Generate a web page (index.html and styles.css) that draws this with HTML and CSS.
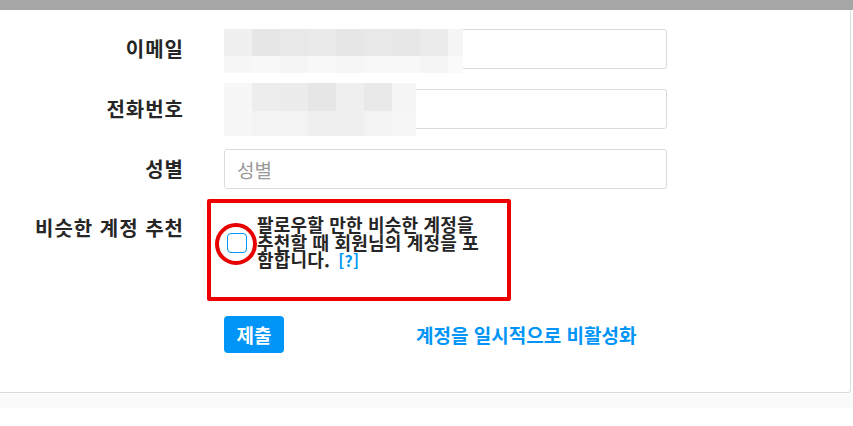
FILE: index.html
```html
<!DOCTYPE html>
<html lang="ko">
<head>
  <meta charset="UTF-8">
  <meta name="viewport" content="width=device-width, initial-scale=1.0">
  <title>프로필 편집</title>
  <link rel="stylesheet" href="styles.css">
</head>
<body>
  <div class="topbar"></div>

  <main class="card">
    <form class="settings">
      <div class="row">
        <label class="field-label" for="email">이메일</label>
        <div class="field">
          <input class="text-input" type="text" id="email">
          <div class="blur blur-email"></div>
        </div>
      </div>

      <div class="row">
        <label class="field-label" for="phone">전화번호</label>
        <div class="field">
          <input class="text-input" type="text" id="phone">
          <div class="blur blur-phone"></div>
        </div>
      </div>

      <div class="row">
        <label class="field-label" for="gender">성별</label>
        <div class="field">
          <input class="text-input" type="text" id="gender" placeholder="성별">
        </div>
      </div>

      <div class="row row-check">
        <label class="field-label" for="similar">비슷한 계정 추천</label>
        <div class="field check-field">
          <span class="check-box"></span>
          <p class="check-text">팔로우할 만한 비슷한 계정을 추천할 때 회원님의 계정을 포함합니다. <a class="help" href="#">[?]</a></p>
          <span class="mark-rect"></span>
          <span class="mark-circle"></span>
        </div>
      </div>

      <div class="row row-actions">
        <span></span>
        <div class="actions">
          <button class="submit" type="submit">제출</button>
          <a class="deactivate" href="#">계정을 일시적으로 비활성화</a>
        </div>
      </div>
    </form>
  </main>

  <div class="footer-strip"></div>
</body>
</html>
```

FILE: styles.css
```css
body {
  margin: 0;
  background: #fff;
  font-family: "Noto Sans CJK KR", "Noto Sans", sans-serif;
  color: #262626;
}

.topbar {
  height: 10px;
  background: #a6a6a6;
}

.card {
  width: 851px;
  height: 383px;
  border-right: 1px solid #dbdbdb;
  border-bottom: 1px solid #dbdbdb;
  border-bottom-right-radius: 3px;
  box-sizing: border-box;
  padding-top: 19px;
}

.footer-strip {
  height: 15px;
  background: #fafafa;
}

.settings {
  display: flex;
  flex-direction: column;
  gap: 20px;
}

.row {
  display: grid;
  grid-template-columns: 184px 443px;
  column-gap: 40px;
}

.field-label {
  text-align: right;
  font-size: 20px;
  font-weight: 700;
  line-height: 40px;
  letter-spacing: 1px;
}

.field {
  position: relative;
}

.text-input {
  display: block;
  width: 100%;
  height: 40px;
  box-sizing: border-box;
  padding: 0 12px;
  border: 1px solid #dbdbdb;
  border-radius: 3px;
  font-family: inherit;
  font-size: 19px;
  color: #262626;
  background: #fff;
}

.text-input::placeholder {
  color: #999;
}

.blur {
  position: absolute;
  left: 0;
  top: 0;
}

.blur-email {
  width: 239px;
  height: 44px;
  background:
    linear-gradient(to right,
      #f0f0f0 0 28px, #e6e6e6 28px 56px, #e8e8e8 56px 84px, #eaeaea 84px 112px,
      #e6e6e6 112px 140px, #e8e8e8 140px 168px, #e7e7e7 168px 196px,
      #ebebeb 196px 224px, #f5f5f5 224px) top / 100% 27px no-repeat,
    linear-gradient(to right,
      #f7f7f7 0 28px, #f8f8f8 28px 56px, #f5f5f5 56px 84px, #f8f8f8 84px 112px,
      #f6f6f6 112px 140px, #f8f8f8 140px 196px, #f5f5f5 196px 224px,
      #fafafa 224px) bottom / 100% 17px no-repeat;
}

.blur-phone {
  top: -6px;
  width: 192px;
  height: 53px;
  background:
    linear-gradient(to right,
      #f7f7f7 0 28px, #ededed 28px 56px, #ececec 56px 84px, #e6e6e6 84px 112px,
      #efefef 112px 140px, #e9e9e9 140px 168px, #f5f5f5 168px) top / 100% 28px no-repeat,
    linear-gradient(to right,
      #f7f7f7 0 28px, #f3f3f3 28px 84px, #f0f0f0 84px 140px,
      #f3f3f3 140px 168px, #f7f7f7 168px) bottom / 100% 25px no-repeat;
}

.row-check .field-label {
  line-height: 20px;
  padding-top: 9px;
}

.check-field {
  display: flex;
  align-items: flex-start;
  gap: 10px;
  padding: 7px 0 0 3px;
  height: 80px;
}

.check-box {
  flex: none;
  width: 18px;
  height: 18px;
  margin-top: 17px;
  border: 1px solid #0095f6;
  border-radius: 4px;
  background: #fff;
}

.check-text {
  margin: 0;
  width: 234px;
  font-size: 18px;
  font-weight: 700;
  line-height: 17.5px;
  letter-spacing: 0.2px;
  color: #262626;
}

.help {
  margin-left: 3px;
  color: #0095f6;
  font-size: 16px;
  text-decoration: none;
}

.mark-rect {
  position: absolute;
  left: -17px;
  top: -10px;
  width: 296px;
  height: 94px;
  border: 4px solid #ee0000;
  border-radius: 2px;
}

.mark-circle {
  position: absolute;
  left: -9px;
  top: 14px;
  width: 34px;
  height: 34px;
  border: 4px solid #e80000;
  border-radius: 50%;
}

.actions {
  display: flex;
  align-items: center;
  gap: 132px;
}

.submit {
  width: 60px;
  height: 37px;
  border: none;
  border-radius: 4px;
  background: #0095f6;
  color: #fff;
  font-family: inherit;
  font-size: 19px;
  font-weight: 700;
  cursor: pointer;
}

.deactivate {
  color: #0095f6;
  font-size: 19px;
  font-weight: 700;
  text-decoration: none;
}
```
